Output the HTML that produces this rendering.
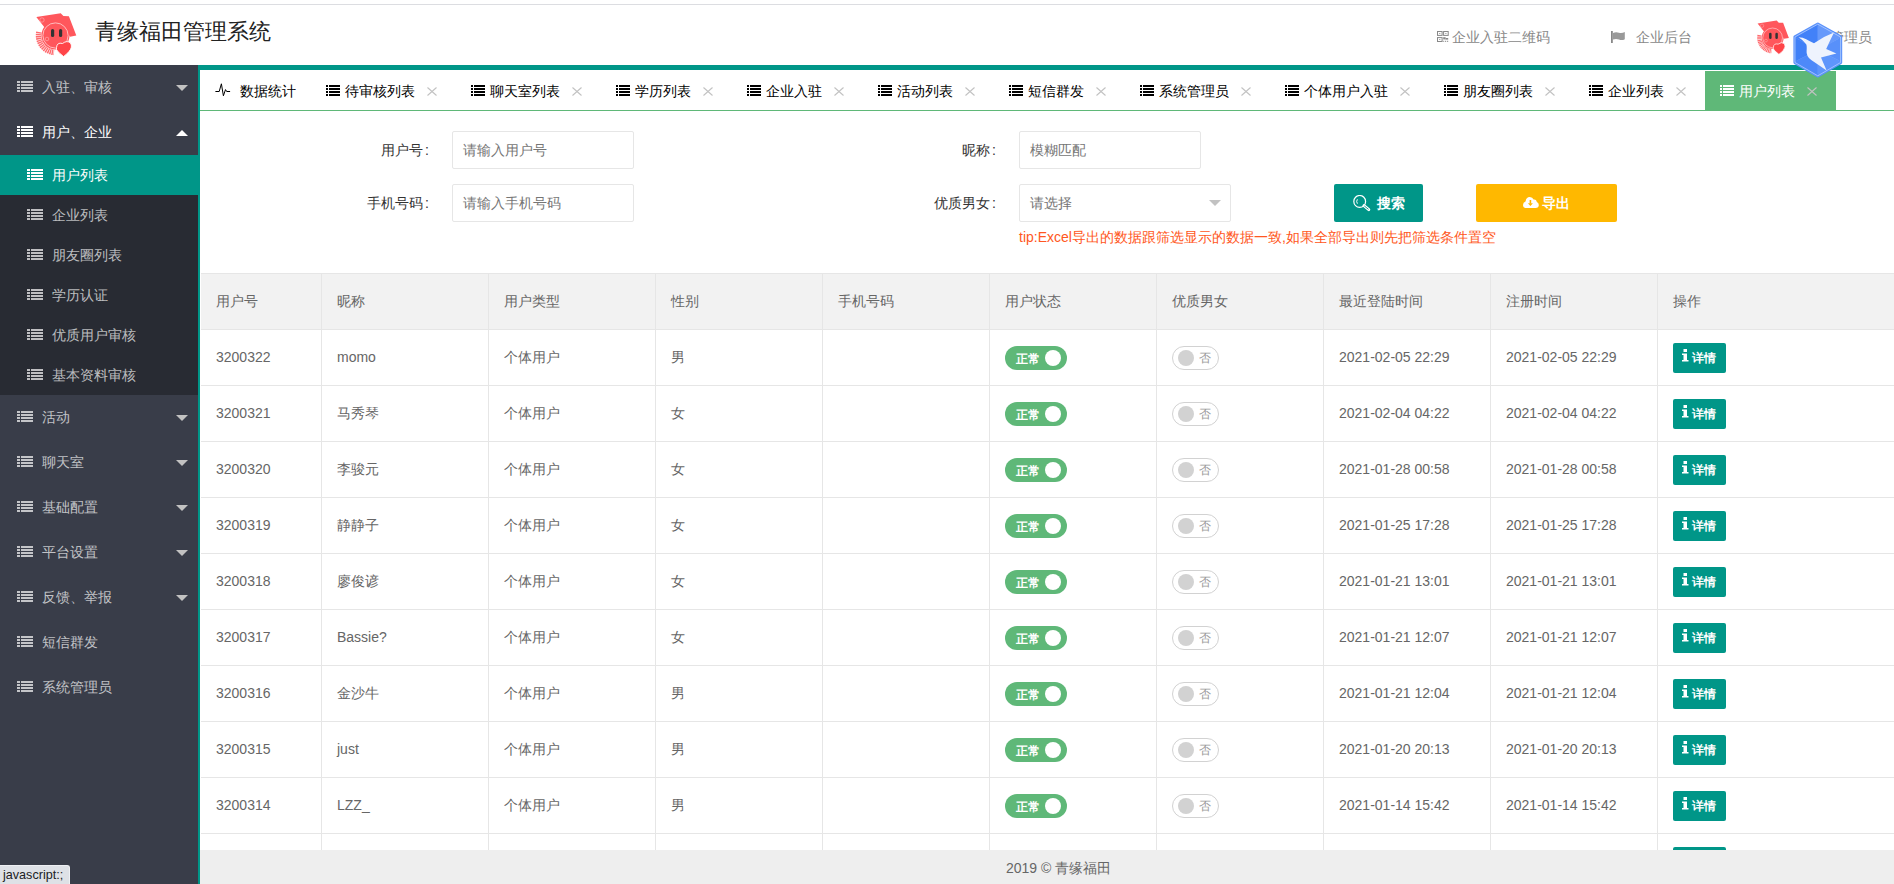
<!DOCTYPE html><html><head><meta charset="utf-8"><style>
*{margin:0;padding:0;box-sizing:border-box}
html,body{width:1894px;height:884px;overflow:hidden;background:#fff;font-family:"Liberation Sans",sans-serif;font-size:14px;color:#333}
.a{position:absolute}
.t{white-space:nowrap;line-height:20px}
#topline{left:0;top:4px;width:1894px;height:1px;background:#dcdde1}
#side{left:0;top:65px;width:198px;height:819px;background:#393D49}
#sideb{left:198px;top:65px;width:2px;height:819px;background:#009688}
#topbar{left:198px;top:65px;width:1696px;height:5px;background:#009688}
.nav{left:0;width:198px;height:45px;color:rgba(255,255,255,.7)}
.nav .ic{position:absolute;left:17px;top:16px;width:16px;height:11px}
.nav .tx{position:absolute;left:42px;top:12px}
.nav .ar{position:absolute;left:176px;top:20px;width:0;height:0;border-left:6px solid transparent;border-right:6px solid transparent;border-top:6px solid #c2c2c2}
.nav .ar.up{border-top:0;border-bottom:6px solid #fff;top:20px}
#sub{left:0;top:155px;width:198px;height:240px;background:#282B33}
.sub{left:0;width:198px;height:40px;color:rgba(255,255,255,.7)}
.sub .ic{position:absolute;left:27px;top:14px}
.sub .tx{position:absolute;left:52px;top:10px}
.sub.on{background:#009688;color:#fff}
.tab{top:71px;height:40px;color:#000}
.tab .ic{position:absolute;top:14px}
.tab .tx{position:absolute;top:10px}
.tab .cl{position:absolute;top:16px;color:#c2c2c2}
#tabline{left:200px;top:110px;width:1694px;height:1px;background:#5FB878}
.lab{color:#333}
.inp{border:1px solid #e6e6e6;border-radius:2px;height:38px;color:#757575}
.inp .ph{position:absolute;left:10px;top:8px}
.btn{border-radius:2px;height:38px;color:#fff}
.th{top:273px;left:201px;width:1693px;height:56px;background:#f2f2f2;border-top:1px solid #e6e6e6}
.hl{height:1px;background:#e6e6e6;left:201px;width:1693px}
.vl{width:1px;background:#e6e6e6;top:273px;height:577px}
.cell{color:#666}
.sw{height:24px;border-radius:20px}
.sw.on{width:62px;background:#5FB878;color:#fff}
.sw.off{width:47px;border:1px solid #d2d2d2;background:#fff;color:#999}
.knob{position:absolute;width:16px;height:16px;border-radius:50%;top:4px}
.det{width:53px;height:30px;background:#009688;border-radius:2px;color:#fff}
#footer{left:200px;top:850px;width:1694px;height:34px;background:#eeeeee;color:#666}
#status{left:0;top:865px;width:70px;height:19px;background:#dee1e6;border-top:1px solid #eef0f3;border-right:1px solid #eef0f3;border-top-right-radius:3px;font-size:12px;color:#202124}
</style></head><body>
<div class="a" id="topline"></div>
<svg class="a" style="left:33px;top:12px" width="46" height="46" viewBox="0 0 46 46">
<path d="M3.3 5 L27.7 1.2 L30.4 4 L35.9 4.3 L43.3 23.6 L37 24.7 L32 16 L12 16 Z" fill="#ff575c"/>
<path d="M5.9 20 A17 17 0 0 0 21 40.4" fill="none" stroke="#ff6a6e" stroke-width="5.5" stroke-dasharray="1.4 0.6"/>
<circle cx="22.5" cy="23.5" r="14" fill="#ff575c"/>
<circle cx="22.5" cy="23.5" r="12.6" fill="none" stroke="#fff" stroke-width="0.7" opacity="0.85"/>
<rect x="18" y="17" width="3.2" height="8" rx="1.6" fill="#333"/><rect x="26" y="17" width="3.2" height="8" rx="1.6" fill="#333"/>
<circle cx="9" cy="8" r="2.2" fill="none" stroke="#ffb3b5" stroke-width="0.6"/>
<circle cx="14" cy="27" r="1.8" fill="none" stroke="#ffb3b5" stroke-width="0.6"/>
<path d="M23.5 35.5 Q24 30 29.5 31.5 Q34 28 37.5 31 Q40 35 36 39.5 Q33 43 30.5 44.5 Q26 41 24.5 39 Q23 37.5 23.5 35.5 Z" fill="#ff4549" stroke="#fff" stroke-width="0.9"/>
</svg>
<div class="a t" style="left:95px;top:19px;font-size:22px;line-height:26px;color:#222">青缘福田管理系统</div>
<svg class="a" style="left:1437px;top:31px" width="13" height="12" viewBox="0 0 13 12"><g fill="none" stroke="#888" stroke-width="1"><rect x="0.5" y="0.5" width="4.6" height="3.9"/><rect x="6.6" y="0.5" width="4.6" height="3.9"/><rect x="0.5" y="6.6" width="4.6" height="3.9"/></g><g fill="#888"><rect x="2.3" y="2" width="1" height="1"/><rect x="8.4" y="2" width="1" height="1"/><rect x="2.3" y="8" width="1" height="1"/><rect x="6.2" y="6.2" width="2.4" height="2.2"/><rect x="8.6" y="7" width="2.6" height="1.6"/><rect x="6.2" y="9.8" width="1" height="1"/><rect x="8" y="9.8" width="1" height="1"/><rect x="9.8" y="9.8" width="1.4" height="1"/></g></svg>
<div class="a t" style="left:1452px;top:27px;color:#888">企业入驻二维码</div>
<svg class="a" style="left:1611px;top:31px" width="15" height="12" viewBox="0 0 15 12"><rect x="0" y="0" width="1.8" height="12" fill="#888"/><path d="M2 2 Q5 0.6 8 1.8 Q11 2.6 13.8 1 L13.8 8.2 Q11 9.8 8 8.6 Q5 7.6 2 8.6 Z" fill="#999"/></svg>
<div class="a t" style="left:1636px;top:27px;color:#888">企业后台</div>
<svg class="a" style="left:1755px;top:19px" width="36" height="37" viewBox="0 0 46 46">
<path d="M3.3 5 L27.7 1.2 L30.4 4 L35.9 4.3 L43.3 23.6 L37 24.7 L32 16 L12 16 Z" fill="#ff575c"/>
<path d="M5.9 20 A17 17 0 0 0 21 40.4" fill="none" stroke="#ff6a6e" stroke-width="5.5" stroke-dasharray="1.4 0.6"/>
<circle cx="22.5" cy="23.5" r="14" fill="#ff575c"/>
<circle cx="22.5" cy="23.5" r="12.6" fill="none" stroke="#fff" stroke-width="0.7" opacity="0.85"/>
<rect x="18" y="17" width="3.2" height="8" rx="1.6" fill="#333"/><rect x="26" y="17" width="3.2" height="8" rx="1.6" fill="#333"/>
<circle cx="9" cy="8" r="2.2" fill="none" stroke="#ffb3b5" stroke-width="0.6"/>
<circle cx="14" cy="27" r="1.8" fill="none" stroke="#ffb3b5" stroke-width="0.6"/>
<path d="M23.5 35.5 Q24 30 29.5 31.5 Q34 28 37.5 31 Q40 35 36 39.5 Q33 43 30.5 44.5 Q26 41 24.5 39 Q23 37.5 23.5 35.5 Z" fill="#ff4549" stroke="#fff" stroke-width="0.9"/>
</svg>
<div class="a t" style="left:1830px;top:27px;color:#888">管理员</div>
<div class="a" id="side"></div>
<div class="a" id="sub"></div>
<div class="a" id="sideb"></div>
<div class="a nav" style="top:65px"><span class="ic"><svg style="display:block" width="16" height="11" viewBox="0 0 16 11"><g fill="currentColor"><rect x="0" y="0" width="3" height="2"/><rect x="4" y="0" width="12" height="2"/><rect x="0" y="3" width="3" height="2"/><rect x="4" y="3" width="12" height="2"/><rect x="0" y="6" width="3" height="2"/><rect x="4" y="6" width="12" height="2"/><rect x="0" y="9" width="3" height="2"/><rect x="4" y="9" width="12" height="2"/></g></svg></span><span class="tx t">入驻、审核</span><span class="ar"></span></div>
<div class="a nav" style="top:110px;color:#fff"><span class="ic"><svg style="display:block" width="16" height="11" viewBox="0 0 16 11"><g fill="currentColor"><rect x="0" y="0" width="3" height="2"/><rect x="4" y="0" width="12" height="2"/><rect x="0" y="3" width="3" height="2"/><rect x="4" y="3" width="12" height="2"/><rect x="0" y="6" width="3" height="2"/><rect x="4" y="6" width="12" height="2"/><rect x="0" y="9" width="3" height="2"/><rect x="4" y="9" width="12" height="2"/></g></svg></span><span class="tx t">用户、企业</span><span class="ar up"></span></div>
<div class="a nav" style="top:395px"><span class="ic"><svg style="display:block" width="16" height="11" viewBox="0 0 16 11"><g fill="currentColor"><rect x="0" y="0" width="3" height="2"/><rect x="4" y="0" width="12" height="2"/><rect x="0" y="3" width="3" height="2"/><rect x="4" y="3" width="12" height="2"/><rect x="0" y="6" width="3" height="2"/><rect x="4" y="6" width="12" height="2"/><rect x="0" y="9" width="3" height="2"/><rect x="4" y="9" width="12" height="2"/></g></svg></span><span class="tx t">活动</span><span class="ar"></span></div>
<div class="a nav" style="top:440px"><span class="ic"><svg style="display:block" width="16" height="11" viewBox="0 0 16 11"><g fill="currentColor"><rect x="0" y="0" width="3" height="2"/><rect x="4" y="0" width="12" height="2"/><rect x="0" y="3" width="3" height="2"/><rect x="4" y="3" width="12" height="2"/><rect x="0" y="6" width="3" height="2"/><rect x="4" y="6" width="12" height="2"/><rect x="0" y="9" width="3" height="2"/><rect x="4" y="9" width="12" height="2"/></g></svg></span><span class="tx t">聊天室</span><span class="ar"></span></div>
<div class="a nav" style="top:485px"><span class="ic"><svg style="display:block" width="16" height="11" viewBox="0 0 16 11"><g fill="currentColor"><rect x="0" y="0" width="3" height="2"/><rect x="4" y="0" width="12" height="2"/><rect x="0" y="3" width="3" height="2"/><rect x="4" y="3" width="12" height="2"/><rect x="0" y="6" width="3" height="2"/><rect x="4" y="6" width="12" height="2"/><rect x="0" y="9" width="3" height="2"/><rect x="4" y="9" width="12" height="2"/></g></svg></span><span class="tx t">基础配置</span><span class="ar"></span></div>
<div class="a nav" style="top:530px"><span class="ic"><svg style="display:block" width="16" height="11" viewBox="0 0 16 11"><g fill="currentColor"><rect x="0" y="0" width="3" height="2"/><rect x="4" y="0" width="12" height="2"/><rect x="0" y="3" width="3" height="2"/><rect x="4" y="3" width="12" height="2"/><rect x="0" y="6" width="3" height="2"/><rect x="4" y="6" width="12" height="2"/><rect x="0" y="9" width="3" height="2"/><rect x="4" y="9" width="12" height="2"/></g></svg></span><span class="tx t">平台设置</span><span class="ar"></span></div>
<div class="a nav" style="top:575px"><span class="ic"><svg style="display:block" width="16" height="11" viewBox="0 0 16 11"><g fill="currentColor"><rect x="0" y="0" width="3" height="2"/><rect x="4" y="0" width="12" height="2"/><rect x="0" y="3" width="3" height="2"/><rect x="4" y="3" width="12" height="2"/><rect x="0" y="6" width="3" height="2"/><rect x="4" y="6" width="12" height="2"/><rect x="0" y="9" width="3" height="2"/><rect x="4" y="9" width="12" height="2"/></g></svg></span><span class="tx t">反馈、举报</span><span class="ar"></span></div>
<div class="a nav" style="top:620px"><span class="ic"><svg style="display:block" width="16" height="11" viewBox="0 0 16 11"><g fill="currentColor"><rect x="0" y="0" width="3" height="2"/><rect x="4" y="0" width="12" height="2"/><rect x="0" y="3" width="3" height="2"/><rect x="4" y="3" width="12" height="2"/><rect x="0" y="6" width="3" height="2"/><rect x="4" y="6" width="12" height="2"/><rect x="0" y="9" width="3" height="2"/><rect x="4" y="9" width="12" height="2"/></g></svg></span><span class="tx t">短信群发</span></div>
<div class="a nav" style="top:665px"><span class="ic"><svg style="display:block" width="16" height="11" viewBox="0 0 16 11"><g fill="currentColor"><rect x="0" y="0" width="3" height="2"/><rect x="4" y="0" width="12" height="2"/><rect x="0" y="3" width="3" height="2"/><rect x="4" y="3" width="12" height="2"/><rect x="0" y="6" width="3" height="2"/><rect x="4" y="6" width="12" height="2"/><rect x="0" y="9" width="3" height="2"/><rect x="4" y="9" width="12" height="2"/></g></svg></span><span class="tx t">系统管理员</span></div>
<div class="a sub on" style="top:155px"><span class="ic"><svg style="display:block" width="16" height="11" viewBox="0 0 16 11"><g fill="currentColor"><rect x="0" y="0" width="3" height="2"/><rect x="4" y="0" width="12" height="2"/><rect x="0" y="3" width="3" height="2"/><rect x="4" y="3" width="12" height="2"/><rect x="0" y="6" width="3" height="2"/><rect x="4" y="6" width="12" height="2"/><rect x="0" y="9" width="3" height="2"/><rect x="4" y="9" width="12" height="2"/></g></svg></span><span class="tx t">用户列表</span></div>
<div class="a sub" style="top:195px"><span class="ic"><svg style="display:block" width="16" height="11" viewBox="0 0 16 11"><g fill="currentColor"><rect x="0" y="0" width="3" height="2"/><rect x="4" y="0" width="12" height="2"/><rect x="0" y="3" width="3" height="2"/><rect x="4" y="3" width="12" height="2"/><rect x="0" y="6" width="3" height="2"/><rect x="4" y="6" width="12" height="2"/><rect x="0" y="9" width="3" height="2"/><rect x="4" y="9" width="12" height="2"/></g></svg></span><span class="tx t">企业列表</span></div>
<div class="a sub" style="top:235px"><span class="ic"><svg style="display:block" width="16" height="11" viewBox="0 0 16 11"><g fill="currentColor"><rect x="0" y="0" width="3" height="2"/><rect x="4" y="0" width="12" height="2"/><rect x="0" y="3" width="3" height="2"/><rect x="4" y="3" width="12" height="2"/><rect x="0" y="6" width="3" height="2"/><rect x="4" y="6" width="12" height="2"/><rect x="0" y="9" width="3" height="2"/><rect x="4" y="9" width="12" height="2"/></g></svg></span><span class="tx t">朋友圈列表</span></div>
<div class="a sub" style="top:275px"><span class="ic"><svg style="display:block" width="16" height="11" viewBox="0 0 16 11"><g fill="currentColor"><rect x="0" y="0" width="3" height="2"/><rect x="4" y="0" width="12" height="2"/><rect x="0" y="3" width="3" height="2"/><rect x="4" y="3" width="12" height="2"/><rect x="0" y="6" width="3" height="2"/><rect x="4" y="6" width="12" height="2"/><rect x="0" y="9" width="3" height="2"/><rect x="4" y="9" width="12" height="2"/></g></svg></span><span class="tx t">学历认证</span></div>
<div class="a sub" style="top:315px"><span class="ic"><svg style="display:block" width="16" height="11" viewBox="0 0 16 11"><g fill="currentColor"><rect x="0" y="0" width="3" height="2"/><rect x="4" y="0" width="12" height="2"/><rect x="0" y="3" width="3" height="2"/><rect x="4" y="3" width="12" height="2"/><rect x="0" y="6" width="3" height="2"/><rect x="4" y="6" width="12" height="2"/><rect x="0" y="9" width="3" height="2"/><rect x="4" y="9" width="12" height="2"/></g></svg></span><span class="tx t">优质用户审核</span></div>
<div class="a sub" style="top:355px"><span class="ic"><svg style="display:block" width="16" height="11" viewBox="0 0 16 11"><g fill="currentColor"><rect x="0" y="0" width="3" height="2"/><rect x="4" y="0" width="12" height="2"/><rect x="0" y="3" width="3" height="2"/><rect x="4" y="3" width="12" height="2"/><rect x="0" y="6" width="3" height="2"/><rect x="4" y="6" width="12" height="2"/><rect x="0" y="9" width="3" height="2"/><rect x="4" y="9" width="12" height="2"/></g></svg></span><span class="tx t">基本资料审核</span></div>
<div class="a" id="topbar"></div>
<div class="a" id="tabline"></div>
<div class="a tab" style="left:200px;width:111px"><span class="ic" style="left:15px;top:12px"><svg style="display:block" width="16" height="14" viewBox="0 0 16 14"><path d="M0.4 8.5 L4.2 8.5 L6.4 0.8 L8.4 12.8 L10.5 6.6 L11.7 8.5 L15.1 8.5" fill="none" stroke="#000" stroke-width="1" stroke-linejoin="miter"/></svg></span><span class="tx t" style="left:40px">数据统计</span></div>
<div class="a tab" style="left:0;color:#000"><span class="ic" style="left:326px"><svg style="display:block" width="14" height="11" viewBox="0 0 14 11"><g fill="currentColor"><rect x="0" y="0" width="2" height="2"/><rect x="3" y="0" width="11" height="2"/><rect x="0" y="3" width="2" height="2"/><rect x="3" y="3" width="11" height="2"/><rect x="0" y="6" width="2" height="2"/><rect x="3" y="6" width="11" height="2"/><rect x="0" y="9" width="2" height="2"/><rect x="3" y="9" width="11" height="2"/></g></svg></span><span class="tx t" style="left:345px">待审核列表</span><span class="cl" style="left:427px"><svg style="display:block" width="10" height="9" viewBox="0 0 10 9"><path d="M0.5 0.5L9.5 8.5M9.5 0.5L0.5 8.5" stroke="currentColor" stroke-width="1.1" fill="none"/></svg></span></div>
<div class="a tab" style="left:0;color:#000"><span class="ic" style="left:471px"><svg style="display:block" width="14" height="11" viewBox="0 0 14 11"><g fill="currentColor"><rect x="0" y="0" width="2" height="2"/><rect x="3" y="0" width="11" height="2"/><rect x="0" y="3" width="2" height="2"/><rect x="3" y="3" width="11" height="2"/><rect x="0" y="6" width="2" height="2"/><rect x="3" y="6" width="11" height="2"/><rect x="0" y="9" width="2" height="2"/><rect x="3" y="9" width="11" height="2"/></g></svg></span><span class="tx t" style="left:490px">聊天室列表</span><span class="cl" style="left:572px"><svg style="display:block" width="10" height="9" viewBox="0 0 10 9"><path d="M0.5 0.5L9.5 8.5M9.5 0.5L0.5 8.5" stroke="currentColor" stroke-width="1.1" fill="none"/></svg></span></div>
<div class="a tab" style="left:0;color:#000"><span class="ic" style="left:616px"><svg style="display:block" width="14" height="11" viewBox="0 0 14 11"><g fill="currentColor"><rect x="0" y="0" width="2" height="2"/><rect x="3" y="0" width="11" height="2"/><rect x="0" y="3" width="2" height="2"/><rect x="3" y="3" width="11" height="2"/><rect x="0" y="6" width="2" height="2"/><rect x="3" y="6" width="11" height="2"/><rect x="0" y="9" width="2" height="2"/><rect x="3" y="9" width="11" height="2"/></g></svg></span><span class="tx t" style="left:635px">学历列表</span><span class="cl" style="left:703px"><svg style="display:block" width="10" height="9" viewBox="0 0 10 9"><path d="M0.5 0.5L9.5 8.5M9.5 0.5L0.5 8.5" stroke="currentColor" stroke-width="1.1" fill="none"/></svg></span></div>
<div class="a tab" style="left:0;color:#000"><span class="ic" style="left:747px"><svg style="display:block" width="14" height="11" viewBox="0 0 14 11"><g fill="currentColor"><rect x="0" y="0" width="2" height="2"/><rect x="3" y="0" width="11" height="2"/><rect x="0" y="3" width="2" height="2"/><rect x="3" y="3" width="11" height="2"/><rect x="0" y="6" width="2" height="2"/><rect x="3" y="6" width="11" height="2"/><rect x="0" y="9" width="2" height="2"/><rect x="3" y="9" width="11" height="2"/></g></svg></span><span class="tx t" style="left:766px">企业入驻</span><span class="cl" style="left:834px"><svg style="display:block" width="10" height="9" viewBox="0 0 10 9"><path d="M0.5 0.5L9.5 8.5M9.5 0.5L0.5 8.5" stroke="currentColor" stroke-width="1.1" fill="none"/></svg></span></div>
<div class="a tab" style="left:0;color:#000"><span class="ic" style="left:878px"><svg style="display:block" width="14" height="11" viewBox="0 0 14 11"><g fill="currentColor"><rect x="0" y="0" width="2" height="2"/><rect x="3" y="0" width="11" height="2"/><rect x="0" y="3" width="2" height="2"/><rect x="3" y="3" width="11" height="2"/><rect x="0" y="6" width="2" height="2"/><rect x="3" y="6" width="11" height="2"/><rect x="0" y="9" width="2" height="2"/><rect x="3" y="9" width="11" height="2"/></g></svg></span><span class="tx t" style="left:897px">活动列表</span><span class="cl" style="left:965px"><svg style="display:block" width="10" height="9" viewBox="0 0 10 9"><path d="M0.5 0.5L9.5 8.5M9.5 0.5L0.5 8.5" stroke="currentColor" stroke-width="1.1" fill="none"/></svg></span></div>
<div class="a tab" style="left:0;color:#000"><span class="ic" style="left:1009px"><svg style="display:block" width="14" height="11" viewBox="0 0 14 11"><g fill="currentColor"><rect x="0" y="0" width="2" height="2"/><rect x="3" y="0" width="11" height="2"/><rect x="0" y="3" width="2" height="2"/><rect x="3" y="3" width="11" height="2"/><rect x="0" y="6" width="2" height="2"/><rect x="3" y="6" width="11" height="2"/><rect x="0" y="9" width="2" height="2"/><rect x="3" y="9" width="11" height="2"/></g></svg></span><span class="tx t" style="left:1028px">短信群发</span><span class="cl" style="left:1096px"><svg style="display:block" width="10" height="9" viewBox="0 0 10 9"><path d="M0.5 0.5L9.5 8.5M9.5 0.5L0.5 8.5" stroke="currentColor" stroke-width="1.1" fill="none"/></svg></span></div>
<div class="a tab" style="left:0;color:#000"><span class="ic" style="left:1140px"><svg style="display:block" width="14" height="11" viewBox="0 0 14 11"><g fill="currentColor"><rect x="0" y="0" width="2" height="2"/><rect x="3" y="0" width="11" height="2"/><rect x="0" y="3" width="2" height="2"/><rect x="3" y="3" width="11" height="2"/><rect x="0" y="6" width="2" height="2"/><rect x="3" y="6" width="11" height="2"/><rect x="0" y="9" width="2" height="2"/><rect x="3" y="9" width="11" height="2"/></g></svg></span><span class="tx t" style="left:1159px">系统管理员</span><span class="cl" style="left:1241px"><svg style="display:block" width="10" height="9" viewBox="0 0 10 9"><path d="M0.5 0.5L9.5 8.5M9.5 0.5L0.5 8.5" stroke="currentColor" stroke-width="1.1" fill="none"/></svg></span></div>
<div class="a tab" style="left:0;color:#000"><span class="ic" style="left:1285px"><svg style="display:block" width="14" height="11" viewBox="0 0 14 11"><g fill="currentColor"><rect x="0" y="0" width="2" height="2"/><rect x="3" y="0" width="11" height="2"/><rect x="0" y="3" width="2" height="2"/><rect x="3" y="3" width="11" height="2"/><rect x="0" y="6" width="2" height="2"/><rect x="3" y="6" width="11" height="2"/><rect x="0" y="9" width="2" height="2"/><rect x="3" y="9" width="11" height="2"/></g></svg></span><span class="tx t" style="left:1304px">个体用户入驻</span><span class="cl" style="left:1400px"><svg style="display:block" width="10" height="9" viewBox="0 0 10 9"><path d="M0.5 0.5L9.5 8.5M9.5 0.5L0.5 8.5" stroke="currentColor" stroke-width="1.1" fill="none"/></svg></span></div>
<div class="a tab" style="left:0;color:#000"><span class="ic" style="left:1444px"><svg style="display:block" width="14" height="11" viewBox="0 0 14 11"><g fill="currentColor"><rect x="0" y="0" width="2" height="2"/><rect x="3" y="0" width="11" height="2"/><rect x="0" y="3" width="2" height="2"/><rect x="3" y="3" width="11" height="2"/><rect x="0" y="6" width="2" height="2"/><rect x="3" y="6" width="11" height="2"/><rect x="0" y="9" width="2" height="2"/><rect x="3" y="9" width="11" height="2"/></g></svg></span><span class="tx t" style="left:1463px">朋友圈列表</span><span class="cl" style="left:1545px"><svg style="display:block" width="10" height="9" viewBox="0 0 10 9"><path d="M0.5 0.5L9.5 8.5M9.5 0.5L0.5 8.5" stroke="currentColor" stroke-width="1.1" fill="none"/></svg></span></div>
<div class="a tab" style="left:0;color:#000"><span class="ic" style="left:1589px"><svg style="display:block" width="14" height="11" viewBox="0 0 14 11"><g fill="currentColor"><rect x="0" y="0" width="2" height="2"/><rect x="3" y="0" width="11" height="2"/><rect x="0" y="3" width="2" height="2"/><rect x="3" y="3" width="11" height="2"/><rect x="0" y="6" width="2" height="2"/><rect x="3" y="6" width="11" height="2"/><rect x="0" y="9" width="2" height="2"/><rect x="3" y="9" width="11" height="2"/></g></svg></span><span class="tx t" style="left:1608px">企业列表</span><span class="cl" style="left:1676px"><svg style="display:block" width="10" height="9" viewBox="0 0 10 9"><path d="M0.5 0.5L9.5 8.5M9.5 0.5L0.5 8.5" stroke="currentColor" stroke-width="1.1" fill="none"/></svg></span></div>
<div class="a" style="left:1705px;top:71px;width:131px;height:40px;background:#5FB878"></div>
<div class="a tab" style="left:0;color:#fff"><span class="ic" style="left:1720px"><svg style="display:block" width="14" height="11" viewBox="0 0 14 11"><g fill="currentColor"><rect x="0" y="0" width="2" height="2"/><rect x="3" y="0" width="11" height="2"/><rect x="0" y="3" width="2" height="2"/><rect x="3" y="3" width="11" height="2"/><rect x="0" y="6" width="2" height="2"/><rect x="3" y="6" width="11" height="2"/><rect x="0" y="9" width="2" height="2"/><rect x="3" y="9" width="11" height="2"/></g></svg></span><span class="tx t" style="left:1739px">用户列表</span><span class="cl" style="left:1807px"><svg style="display:block" width="10" height="9" viewBox="0 0 10 9"><path d="M0.5 0.5L9.5 8.5M9.5 0.5L0.5 8.5" stroke="currentColor" stroke-width="1.1" fill="none"/></svg></span></div>
<div class="a t lab" style="left:229px;top:140px;width:200px;text-align:right">用户号<span style="margin-left:2px">:</span></div>
<div class="a t lab" style="left:229px;top:193px;width:200px;text-align:right">手机号码<span style="margin-left:2px">:</span></div>
<div class="a t lab" style="left:796px;top:140px;width:200px;text-align:right">昵称<span style="margin-left:2px">:</span></div>
<div class="a t lab" style="left:796px;top:193px;width:200px;text-align:right">优质男女<span style="margin-left:2px">:</span></div>
<div class="a inp" style="left:452px;top:131px;width:182px"><span class="ph t">请输入用户号</span></div>
<div class="a inp" style="left:452px;top:184px;width:182px"><span class="ph t">请输入手机号码</span></div>
<div class="a inp" style="left:1019px;top:131px;width:182px"><span class="ph t">模糊匹配</span></div>
<div class="a inp" style="left:1019px;top:184px;width:212px"><span class="ph t">请选择</span><span class="a" style="left:189px;top:15px;width:0;height:0;border-left:6px solid transparent;border-right:6px solid transparent;border-top:6px solid #c2c2c2"></span></div>
<div class="a btn" style="left:1334px;top:184px;width:89px;background:#009688"></div>
<svg class="a" style="left:1352px;top:195px" width="19" height="17" viewBox="0 0 19 17"><circle cx="7.7" cy="6.4" r="5.9" fill="none" stroke="#fff" stroke-width="1.2"/><path d="M12 10.6 L16.8 14.6" stroke="#fff" stroke-width="3" stroke-linecap="round"/><path d="M12.6 11.2 L16.2 14.1" stroke="#009688" stroke-width="0.9" stroke-linecap="round"/><path d="M5.4 4.3 Q3.9 6.4 5.4 8.7" stroke="#fff" stroke-width="1" fill="none"/></svg>
<div class="a t" style="left:1377px;top:193px;color:#fff;font-weight:bold">搜索</div>
<div class="a btn" style="left:1476px;top:184px;width:141px;background:#FFB800"></div>
<svg class="a" style="left:1523px;top:197px" width="16" height="11" viewBox="0 0 16 11"><path d="M3.2 11 Q0 11 0 8 Q0 5.2 2.6 4.6 Q3 0 6.8 0 Q9.6 0 10.6 2.6 Q13.2 2.2 13.9 5 Q15.8 5.8 15.8 8 Q15.8 11 12.6 11 Z" fill="#fff"/><path d="M7.4 3 L7.4 6.5" stroke="#FFB800" stroke-width="1.6"/><path d="M4.9 6.2 L9.9 6.2 L7.4 9 Z" fill="#FFB800"/></svg>
<div class="a t" style="left:1542px;top:193px;color:#fff;font-weight:bold">导出</div>
<div class="a t" style="left:1019px;top:227px;color:#FF5722">tip:Excel导出的数据跟筛选显示的数据一致,如果全部导出则先把筛选条件置空</div>
<div class="a th"></div>
<div class="a t cell" style="left:216px;top:291px">用户号</div>
<div class="a t cell" style="left:337px;top:291px">昵称</div>
<div class="a t cell" style="left:504px;top:291px">用户类型</div>
<div class="a t cell" style="left:671px;top:291px">性别</div>
<div class="a t cell" style="left:838px;top:291px">手机号码</div>
<div class="a t cell" style="left:1005px;top:291px">用户状态</div>
<div class="a t cell" style="left:1172px;top:291px">优质男女</div>
<div class="a t cell" style="left:1339px;top:291px">最近登陆时间</div>
<div class="a t cell" style="left:1506px;top:291px">注册时间</div>
<div class="a t cell" style="left:1673px;top:291px">操作</div>
<div class="a hl" style="top:329px"></div>
<div class="a hl" style="top:385px"></div>
<div class="a hl" style="top:441px"></div>
<div class="a hl" style="top:497px"></div>
<div class="a hl" style="top:553px"></div>
<div class="a hl" style="top:609px"></div>
<div class="a hl" style="top:665px"></div>
<div class="a hl" style="top:721px"></div>
<div class="a hl" style="top:777px"></div>
<div class="a hl" style="top:833px"></div>
<div class="a vl" style="left:321px"></div>
<div class="a vl" style="left:488px"></div>
<div class="a vl" style="left:655px"></div>
<div class="a vl" style="left:822px"></div>
<div class="a vl" style="left:989px"></div>
<div class="a vl" style="left:1156px"></div>
<div class="a vl" style="left:1323px"></div>
<div class="a vl" style="left:1490px"></div>
<div class="a vl" style="left:1657px"></div>
<div class="a t cell" style="left:216px;top:347px">3200322</div>
<div class="a t cell" style="left:337px;top:347px">momo</div>
<div class="a t cell" style="left:504px;top:347px">个体用户</div>
<div class="a t cell" style="left:671px;top:347px">男</div>
<div class="a t cell" style="left:1339px;top:347px">2021-02-05 22:29</div>
<div class="a t cell" style="left:1506px;top:347px">2021-02-05 22:29</div>
<div class="a sw on" style="left:1005px;top:346px"><span class="a t" style="left:11px;top:4px;font-size:12px;line-height:18px;font-weight:bold">正常</span><span class="knob" style="left:40px;background:#fff"></span></div>
<div class="a sw off" style="left:1172px;top:346px"><span class="knob" style="left:5px;top:3px;background:#d2d2d2"></span><span class="a t" style="left:26px;top:1px;font-size:12px">否</span></div>
<div class="a det" style="left:1673px;top:343px"><svg class="a" style="left:9px;top:6px" width="7" height="13" viewBox="0 0 7 13"><rect x="1.5" y="0" width="3.5" height="3" fill="#fff"/><path d="M0 4.5 L5 4.5 L5 11 L6.5 11 L6.5 12.5 L0 12.5 L0 11 L1.5 11 L1.5 6 L0 6 Z" fill="#fff"/></svg><span class="a t" style="left:19px;top:5px;font-size:12px;font-weight:bold">详情</span></div>
<div class="a t cell" style="left:216px;top:403px">3200321</div>
<div class="a t cell" style="left:337px;top:403px">马秀琴</div>
<div class="a t cell" style="left:504px;top:403px">个体用户</div>
<div class="a t cell" style="left:671px;top:403px">女</div>
<div class="a t cell" style="left:1339px;top:403px">2021-02-04 04:22</div>
<div class="a t cell" style="left:1506px;top:403px">2021-02-04 04:22</div>
<div class="a sw on" style="left:1005px;top:402px"><span class="a t" style="left:11px;top:4px;font-size:12px;line-height:18px;font-weight:bold">正常</span><span class="knob" style="left:40px;background:#fff"></span></div>
<div class="a sw off" style="left:1172px;top:402px"><span class="knob" style="left:5px;top:3px;background:#d2d2d2"></span><span class="a t" style="left:26px;top:1px;font-size:12px">否</span></div>
<div class="a det" style="left:1673px;top:399px"><svg class="a" style="left:9px;top:6px" width="7" height="13" viewBox="0 0 7 13"><rect x="1.5" y="0" width="3.5" height="3" fill="#fff"/><path d="M0 4.5 L5 4.5 L5 11 L6.5 11 L6.5 12.5 L0 12.5 L0 11 L1.5 11 L1.5 6 L0 6 Z" fill="#fff"/></svg><span class="a t" style="left:19px;top:5px;font-size:12px;font-weight:bold">详情</span></div>
<div class="a t cell" style="left:216px;top:459px">3200320</div>
<div class="a t cell" style="left:337px;top:459px">李骏元</div>
<div class="a t cell" style="left:504px;top:459px">个体用户</div>
<div class="a t cell" style="left:671px;top:459px">女</div>
<div class="a t cell" style="left:1339px;top:459px">2021-01-28 00:58</div>
<div class="a t cell" style="left:1506px;top:459px">2021-01-28 00:58</div>
<div class="a sw on" style="left:1005px;top:458px"><span class="a t" style="left:11px;top:4px;font-size:12px;line-height:18px;font-weight:bold">正常</span><span class="knob" style="left:40px;background:#fff"></span></div>
<div class="a sw off" style="left:1172px;top:458px"><span class="knob" style="left:5px;top:3px;background:#d2d2d2"></span><span class="a t" style="left:26px;top:1px;font-size:12px">否</span></div>
<div class="a det" style="left:1673px;top:455px"><svg class="a" style="left:9px;top:6px" width="7" height="13" viewBox="0 0 7 13"><rect x="1.5" y="0" width="3.5" height="3" fill="#fff"/><path d="M0 4.5 L5 4.5 L5 11 L6.5 11 L6.5 12.5 L0 12.5 L0 11 L1.5 11 L1.5 6 L0 6 Z" fill="#fff"/></svg><span class="a t" style="left:19px;top:5px;font-size:12px;font-weight:bold">详情</span></div>
<div class="a t cell" style="left:216px;top:515px">3200319</div>
<div class="a t cell" style="left:337px;top:515px">静静子</div>
<div class="a t cell" style="left:504px;top:515px">个体用户</div>
<div class="a t cell" style="left:671px;top:515px">女</div>
<div class="a t cell" style="left:1339px;top:515px">2021-01-25 17:28</div>
<div class="a t cell" style="left:1506px;top:515px">2021-01-25 17:28</div>
<div class="a sw on" style="left:1005px;top:514px"><span class="a t" style="left:11px;top:4px;font-size:12px;line-height:18px;font-weight:bold">正常</span><span class="knob" style="left:40px;background:#fff"></span></div>
<div class="a sw off" style="left:1172px;top:514px"><span class="knob" style="left:5px;top:3px;background:#d2d2d2"></span><span class="a t" style="left:26px;top:1px;font-size:12px">否</span></div>
<div class="a det" style="left:1673px;top:511px"><svg class="a" style="left:9px;top:6px" width="7" height="13" viewBox="0 0 7 13"><rect x="1.5" y="0" width="3.5" height="3" fill="#fff"/><path d="M0 4.5 L5 4.5 L5 11 L6.5 11 L6.5 12.5 L0 12.5 L0 11 L1.5 11 L1.5 6 L0 6 Z" fill="#fff"/></svg><span class="a t" style="left:19px;top:5px;font-size:12px;font-weight:bold">详情</span></div>
<div class="a t cell" style="left:216px;top:571px">3200318</div>
<div class="a t cell" style="left:337px;top:571px">廖俊谚</div>
<div class="a t cell" style="left:504px;top:571px">个体用户</div>
<div class="a t cell" style="left:671px;top:571px">女</div>
<div class="a t cell" style="left:1339px;top:571px">2021-01-21 13:01</div>
<div class="a t cell" style="left:1506px;top:571px">2021-01-21 13:01</div>
<div class="a sw on" style="left:1005px;top:570px"><span class="a t" style="left:11px;top:4px;font-size:12px;line-height:18px;font-weight:bold">正常</span><span class="knob" style="left:40px;background:#fff"></span></div>
<div class="a sw off" style="left:1172px;top:570px"><span class="knob" style="left:5px;top:3px;background:#d2d2d2"></span><span class="a t" style="left:26px;top:1px;font-size:12px">否</span></div>
<div class="a det" style="left:1673px;top:567px"><svg class="a" style="left:9px;top:6px" width="7" height="13" viewBox="0 0 7 13"><rect x="1.5" y="0" width="3.5" height="3" fill="#fff"/><path d="M0 4.5 L5 4.5 L5 11 L6.5 11 L6.5 12.5 L0 12.5 L0 11 L1.5 11 L1.5 6 L0 6 Z" fill="#fff"/></svg><span class="a t" style="left:19px;top:5px;font-size:12px;font-weight:bold">详情</span></div>
<div class="a t cell" style="left:216px;top:627px">3200317</div>
<div class="a t cell" style="left:337px;top:627px">Bassie?</div>
<div class="a t cell" style="left:504px;top:627px">个体用户</div>
<div class="a t cell" style="left:671px;top:627px">女</div>
<div class="a t cell" style="left:1339px;top:627px">2021-01-21 12:07</div>
<div class="a t cell" style="left:1506px;top:627px">2021-01-21 12:07</div>
<div class="a sw on" style="left:1005px;top:626px"><span class="a t" style="left:11px;top:4px;font-size:12px;line-height:18px;font-weight:bold">正常</span><span class="knob" style="left:40px;background:#fff"></span></div>
<div class="a sw off" style="left:1172px;top:626px"><span class="knob" style="left:5px;top:3px;background:#d2d2d2"></span><span class="a t" style="left:26px;top:1px;font-size:12px">否</span></div>
<div class="a det" style="left:1673px;top:623px"><svg class="a" style="left:9px;top:6px" width="7" height="13" viewBox="0 0 7 13"><rect x="1.5" y="0" width="3.5" height="3" fill="#fff"/><path d="M0 4.5 L5 4.5 L5 11 L6.5 11 L6.5 12.5 L0 12.5 L0 11 L1.5 11 L1.5 6 L0 6 Z" fill="#fff"/></svg><span class="a t" style="left:19px;top:5px;font-size:12px;font-weight:bold">详情</span></div>
<div class="a t cell" style="left:216px;top:683px">3200316</div>
<div class="a t cell" style="left:337px;top:683px">金沙牛</div>
<div class="a t cell" style="left:504px;top:683px">个体用户</div>
<div class="a t cell" style="left:671px;top:683px">男</div>
<div class="a t cell" style="left:1339px;top:683px">2021-01-21 12:04</div>
<div class="a t cell" style="left:1506px;top:683px">2021-01-21 12:04</div>
<div class="a sw on" style="left:1005px;top:682px"><span class="a t" style="left:11px;top:4px;font-size:12px;line-height:18px;font-weight:bold">正常</span><span class="knob" style="left:40px;background:#fff"></span></div>
<div class="a sw off" style="left:1172px;top:682px"><span class="knob" style="left:5px;top:3px;background:#d2d2d2"></span><span class="a t" style="left:26px;top:1px;font-size:12px">否</span></div>
<div class="a det" style="left:1673px;top:679px"><svg class="a" style="left:9px;top:6px" width="7" height="13" viewBox="0 0 7 13"><rect x="1.5" y="0" width="3.5" height="3" fill="#fff"/><path d="M0 4.5 L5 4.5 L5 11 L6.5 11 L6.5 12.5 L0 12.5 L0 11 L1.5 11 L1.5 6 L0 6 Z" fill="#fff"/></svg><span class="a t" style="left:19px;top:5px;font-size:12px;font-weight:bold">详情</span></div>
<div class="a t cell" style="left:216px;top:739px">3200315</div>
<div class="a t cell" style="left:337px;top:739px">just</div>
<div class="a t cell" style="left:504px;top:739px">个体用户</div>
<div class="a t cell" style="left:671px;top:739px">男</div>
<div class="a t cell" style="left:1339px;top:739px">2021-01-20 20:13</div>
<div class="a t cell" style="left:1506px;top:739px">2021-01-20 20:13</div>
<div class="a sw on" style="left:1005px;top:738px"><span class="a t" style="left:11px;top:4px;font-size:12px;line-height:18px;font-weight:bold">正常</span><span class="knob" style="left:40px;background:#fff"></span></div>
<div class="a sw off" style="left:1172px;top:738px"><span class="knob" style="left:5px;top:3px;background:#d2d2d2"></span><span class="a t" style="left:26px;top:1px;font-size:12px">否</span></div>
<div class="a det" style="left:1673px;top:735px"><svg class="a" style="left:9px;top:6px" width="7" height="13" viewBox="0 0 7 13"><rect x="1.5" y="0" width="3.5" height="3" fill="#fff"/><path d="M0 4.5 L5 4.5 L5 11 L6.5 11 L6.5 12.5 L0 12.5 L0 11 L1.5 11 L1.5 6 L0 6 Z" fill="#fff"/></svg><span class="a t" style="left:19px;top:5px;font-size:12px;font-weight:bold">详情</span></div>
<div class="a t cell" style="left:216px;top:795px">3200314</div>
<div class="a t cell" style="left:337px;top:795px">LZZ_</div>
<div class="a t cell" style="left:504px;top:795px">个体用户</div>
<div class="a t cell" style="left:671px;top:795px">男</div>
<div class="a t cell" style="left:1339px;top:795px">2021-01-14 15:42</div>
<div class="a t cell" style="left:1506px;top:795px">2021-01-14 15:42</div>
<div class="a sw on" style="left:1005px;top:794px"><span class="a t" style="left:11px;top:4px;font-size:12px;line-height:18px;font-weight:bold">正常</span><span class="knob" style="left:40px;background:#fff"></span></div>
<div class="a sw off" style="left:1172px;top:794px"><span class="knob" style="left:5px;top:3px;background:#d2d2d2"></span><span class="a t" style="left:26px;top:1px;font-size:12px">否</span></div>
<div class="a det" style="left:1673px;top:791px"><svg class="a" style="left:9px;top:6px" width="7" height="13" viewBox="0 0 7 13"><rect x="1.5" y="0" width="3.5" height="3" fill="#fff"/><path d="M0 4.5 L5 4.5 L5 11 L6.5 11 L6.5 12.5 L0 12.5 L0 11 L1.5 11 L1.5 6 L0 6 Z" fill="#fff"/></svg><span class="a t" style="left:19px;top:5px;font-size:12px;font-weight:bold">详情</span></div>
<div class="a det" style="left:1673px;top:847px"><svg class="a" style="left:9px;top:6px" width="7" height="13" viewBox="0 0 7 13"><rect x="1.5" y="0" width="3.5" height="3" fill="#fff"/><path d="M0 4.5 L5 4.5 L5 11 L6.5 11 L6.5 12.5 L0 12.5 L0 11 L1.5 11 L1.5 6 L0 6 Z" fill="#fff"/></svg><span class="a t" style="left:19px;top:5px;font-size:12px;font-weight:bold">详情</span></div>
<div class="a" id="footer"><div class="a t" style="left:806px;top:8px">2019 © 青缘福田</div></div>
<div class="a" id="status"><span class="a t" style="left:3px;top:-1px;font-size:12.6px">javascript:;</span></div>
<svg class="a" style="left:1792px;top:21px" width="52" height="58" viewBox="0 0 52 58">
<defs><clipPath id="hx"><path d="M25.8 3.2 L48.6 16 L48.6 41.5 L25.8 54.8 L3 41.5 L3 16 Z" stroke-linejoin="round"/></clipPath></defs>
<path d="M25.8 3.2 L48.6 16 L48.6 41.5 L25.8 54.8 L3 41.5 L3 16 Z" fill="#8fb6ff" stroke="#5b92fb" stroke-width="3.2" stroke-linejoin="round"/>
<g clip-path="url(#hx)">
<path d="M25.8 28.9 L25.8 0 L0 0 L0 15 Z" fill="#4281f8"/>
<path d="M25.8 28.9 L25.8 0 L52 0 L52 15 Z" fill="#6699fb"/>
<path d="M25.8 28.9 L52 15 L52 42 Z" fill="#5890fa"/>
<path d="M25.8 28.9 L52 42 L52 58 L25.8 58 Z" fill="#5f96fb"/>
<path d="M25.8 28.9 L25.8 58 L0 58 L0 42 Z" fill="#4d89f9"/>
<path d="M25.8 28.9 L0 42 L0 15 Z" fill="#4080f7"/>
</g>
<path d="M25.8 3.2 L48.6 16 L48.6 41.5 L25.8 54.8 L3 41.5 L3 16 Z" fill="none" stroke="#c3d8ff" stroke-width="0.8" stroke-linejoin="round" opacity="0.85"/>
<path d="M6.5 16.3 Q11 16.3 14.2 18.3 Q18 20.5 22 22.3 Q32 15 42 11.4 L38.1 19.5 L34.2 27.9 L44.4 32.4 L29 36.6 L34.6 49.6 Q25 43 19.2 39.1 Q14 35 14.6 30 Q15 25 14.2 23.2 Q11 19 6.5 16.3 Z" fill="#eef3fd"/>
</svg>
</body></html>
